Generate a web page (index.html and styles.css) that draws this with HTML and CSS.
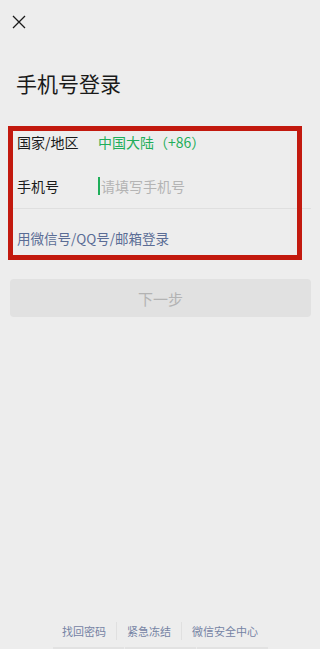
FILE: index.html
```html
<!DOCTYPE html>
<html lang="zh-CN">
<head>
    <meta charset="UTF-8">
    <meta name="viewport" content="width=device-width, initial-scale=1.0">
    <title>手机号登录</title>
    <link rel="stylesheet" href="styles.css">
</head>
<body>

<div class="page">
    <div class="topbar">
        <svg class="close" width="14" height="14" viewBox="0 0 14 14">
            <path d="M1 1 L13 13 M13 1 L1 13" stroke="#1a1a1a" stroke-width="1.3" fill="none"/>
        </svg>
    </div>

    <h1 class="title">手机号登录</h1>

    <div class="form">
        <div class="row">
            <div class="label">国家/地区</div>
            <div class="value green">中国大陆（+86）</div>
        </div>
        <div class="row">
            <div class="label">手机号</div>
            <div class="value">
                <span class="cursor"></span><span class="placeholder">请填写手机号</span>
            </div>
        </div>
        <div class="divider"></div>
        <div class="row link-row">用微信号/QQ号/邮箱登录</div>

        <!-- annotation box drawn over the form -->
        <div class="mark"></div>
    </div>

    <button class="next-btn">下一步</button>

    <div class="footer">
        <div class="links">
            <span class="link">找回密码</span>
            <span class="link">紧急冻结</span>
            <span class="link">微信安全中心</span>
        </div>
        <div class="home-bar">
            <span></span><span></span><span></span>
        </div>
    </div>
</div>

</body>
</html>
```

FILE: styles.css
```css
html, body {
    margin: 0;
    height: 100%;
}

body {
    background-color: #ededed;
    font-family: "Noto Sans CJK SC", "Noto Sans", sans-serif;
    color: #1a1a1a;
}

.page {
    display: flex;
    flex-direction: column;
    min-height: 100vh;
}

.topbar {
    height: 44px;
    display: flex;
    align-items: center;
    padding-left: 12px;
}

.title {
    margin: 24px 0 22px 16px;
    font-size: 21px;
    font-weight: 400;
    line-height: 30px;
}

.form {
    position: relative;
}

.row {
    height: 44px;
    display: flex;
    align-items: center;
    padding-left: 17px;
    font-size: 14px;
}

.label {
    width: 81px;
}

.value {
    display: flex;
    align-items: center;
}

.green {
    color: #1fae5a;
}

.cursor {
    width: 2px;
    height: 18px;
    background-color: #1fae5a;
    margin-right: 1px;
}

.placeholder {
    color: #b4b4b4;
}

.divider {
    height: 1px;
    background-color: #dfdfdf;
    margin: 0 9px 0 10px;
}

.link-row {
    height: 58px;
    color: #5a6c95;
    font-size: 13.5px;
}

.mark {
    position: absolute;
    top: 6px;
    left: 8px;
    width: 284px;
    height: 124px;
    border: 5px solid #c2190e;
}

.next-btn {
    margin: 12px 9px 0 10px;
    height: 38px;
    border: none;
    border-radius: 4px;
    background-color: #e1e1e1;
    color: #b3b3b3;
    font-family: inherit;
    font-size: 15px;
}

.footer {
    margin-top: auto;
}

.links {
    display: flex;
    justify-content: center;
    height: 20px;
    align-items: center;
}

.link {
    font-size: 11px;
    line-height: 18px;
    color: #7583a4;
    padding: 0 10px;
}

.link + .link {
    border-left: 1px solid #e0e0e0;
}

.home-bar {
    display: flex;
    justify-content: center;
    gap: 1px;
    margin-top: 6px;
}

.home-bar span {
    width: 71px;
    height: 2px;
    background-color: #e2e2e2;
}
```
